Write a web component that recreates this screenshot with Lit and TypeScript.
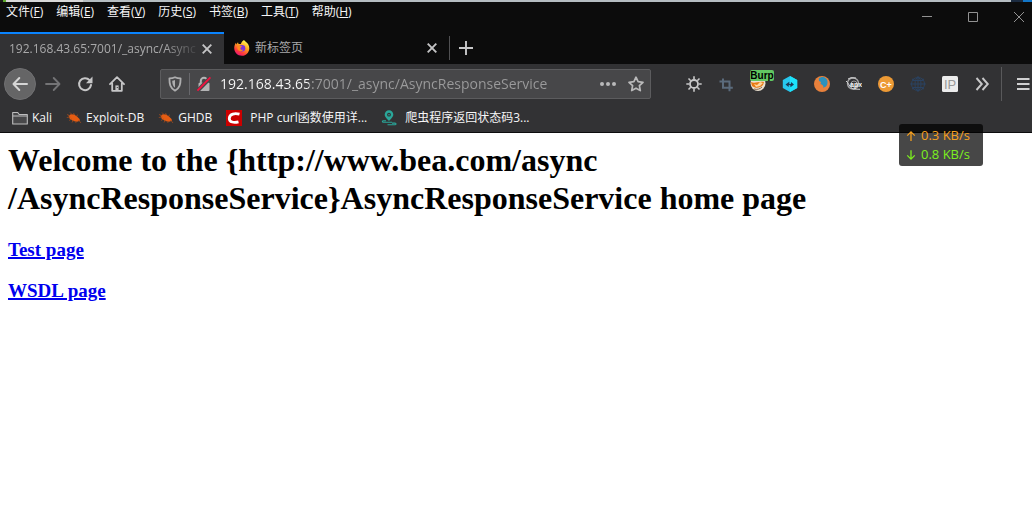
import { LitElement, html, css, svg, nothing } from "lit";
import { customElement } from "lit/decorators.js";

const icon = (body: unknown, size = 16) => html`<svg class="icon" width=${size} height=${size} viewBox="0 0 16 16" fill="none" aria-hidden="true">${body}</svg>`;

const closeIcon = icon(svg`<path d="M3.700 3.700l8.600 8.600M12.300 3.700l-8.600 8.600" stroke="#c4c4c5" stroke-width="1.900"/>`);
const plusIcon = icon(svg`<path d="M8 1v14M1 8h14" stroke="#c8c8c9" stroke-width="1.900"/>`);
const backIcon = icon(svg`<path d="M15 8H2M7.300 2L1.500 8l5.800 6" stroke="#d6d6d6" stroke-width="2" stroke-linecap="round" stroke-linejoin="round"/>`);
const forwardIcon = icon(svg`<path d="M1 8h13M8.700 2l5.800 6-5.800 6" stroke="#747476" stroke-width="1.800" stroke-linecap="round" stroke-linejoin="round"/>`);
const reloadIcon = icon(svg`<path d="M12.600 4.200A6 6 0 1 0 14 9" stroke="#c6c6c7" stroke-width="2" stroke-linecap="round"/><path d="M15.500 .6v6.600H9z" fill="#c6c6c7"/>`);
const homeIcon = icon(svg`<path d="M1 8.200L8 1.200l7 7M3.200 7.500v7.300h9.600V7.500" stroke="#c6c6c7" stroke-width="1.800" stroke-linecap="round" stroke-linejoin="round"/><path d="M6.400 14.500V9.400h3.200v5.100z" fill="#c6c6c7"/><path d="M7.800 11.500h1" stroke="#323234"/>`);
const shieldIcon = icon(svg`<path d="M8 1.200c2 1 3.900 1.200 5.600 1.200 0 5.600-.7 9.500-5.600 12.300C3.100 11.900 2.400 8 2.400 2.400 4.100 2.400 6 2.200 8 1.200z" stroke="#adadae" stroke-width="1.800" stroke-linejoin="round"/><path d="M8 4v7.800C5.900 10 5.300 7.900 5.200 4.700 6.200 4.600 7 4.400 8 4z" fill="#adadae"/>`);
const lockIcon = icon(svg`<path d="M4.800 7V5a3.200 3.200 0 0 1 6.400 0v2" stroke="#b4b4b5" stroke-width="2"/><rect x="2.500" y="6.800" width="11" height="8.200" rx="1" fill="#b4b4b5"/><path d="M1.500 14.800L14.500 1.500" stroke="#474749" stroke-width="4"/><path d="M1.400 14.600L14.400 1.400" stroke="#f5103f" stroke-width="1.800"/>`);
const dotsIcon = icon(svg`<g fill="#b9b9ba"><circle cx="2" cy="8" r="2"/><circle cx="8" cy="8" r="2"/><circle cx="14" cy="8" r="2"/></g>`);
const starIcon = icon(svg`<path d="M8 1.200l2.100 4.500 4.900.6-3.600 3.400.9 4.900L8 12.200l-4.300 2.400.9-4.900L1 6.300l4.900-.6z" stroke="#b9b9ba" stroke-width="1.700" stroke-linejoin="round"/>`);
const gearIcon = icon(svg`<circle cx="8" cy="8" r="4" stroke="#c8c8c9" stroke-width="1.800"/><path d="M8 .3v3M8 12.700v3M.3 8h3M12.700 8h3M2.500 2.500l2.200 2.200M11.300 11.300l2.200 2.200M2.500 13.500l2.200-2.200M11.300 4.700l2.200-2.200" stroke="#c8c8c9" stroke-width="1.600"/>`);
const cropIcon = icon(svg`<path d="M1.500 5.500h10v9.800M5 2.500v9.300h9.800" stroke="#5b6b7c" stroke-width="2"/>`);
const foxProxyIcon = icon(svg`<circle cx="8" cy="7.500" r="7.500" fill="#eadfce"/><path d="M1 6c4 2 7-1 13 0l-1 3c-3 3-7 4-11 1z" fill="#e87912"/><path d="M4 8l3 1 3-3 3 1-3 3-4 1z" fill="#ffd59a"/><path d="M4 13c3 1 6 0 8-2" stroke="#8a6a50"/>`);
const hexIcon = icon(svg`<path d="M8 0l7.200 4v8L8 16 .8 12V4z" fill="#27c7ee"/><path d="M8 0l7.200 4v8L8 16z" fill="#1ce3fb"/><path d="M3.500 8.400l3.800-2.600v2.100l1.500.2.200-2.100 3 2.400-3.500 2.800-.2-1.900-1.500-.2-.2 2z" fill="#1d3a57"/>`);
const foxIcon = icon(svg`<circle cx="8" cy="8" r="8" fill="#e8813c"/><path d="M4.800 2.500C8-.5 13 1 13.500 5.500c.3 3.500-1.500 6-4.500 6 1-1.500 0-2.500-2.500-3.500l.5-2-2-1z" fill="#2c91bd"/>`);
const shadyIcon = icon(svg`<circle cx="7" cy="7.500" r="5.500" stroke="#a5a5a6" stroke-width="1.400"/><circle cx="8" cy="8" r="3" stroke="#9a9a9b"/><path d="M0 5c3 2 3 6 7 8l7 .3M2 3l3-1.300 5 .3" stroke="#d3d3d3"/><text class="tiny-light" x="4" y="11">apx</text>`);
const cPlusIcon = icon(svg`<circle cx="8" cy="8" r="8" fill="#ed9a35"/><text class="tiny-c" x="2" y="11.500">C+</text>`);
const globeIcon = icon(svg`<g stroke="#2b4260"><circle cx="8" cy="8" r="6.500"/><ellipse cx="8" cy="8" rx="3" ry="6.500"/><path d="M8 1v14M1 8h14M2.500 4.500h11M2.500 11.500h11"/></g><g fill="#2b4260"><circle cx="8" cy="1.300" r="1"/><circle cx="8" cy="14.700" r="1"/><circle cx="1.300" cy="8" r="1"/><circle cx="14.700" cy="8" r="1"/><circle cx="3" cy="3.500" r="1"/><circle cx="13" cy="3.500" r="1"/><circle cx="3" cy="12.500" r="1"/><circle cx="13" cy="12.500" r="1"/></g>`);
const ipIcon = icon(svg`<rect width="16" height="16" rx="1.500" fill="#ececec"/><text class="tiny-ip" x="2" y="12.500">IP</text>`);
const moreIcon = icon(svg`<path d="M2.500 2l5.300 6-5.300 6M8.500 2l5.300 6-5.300 6" stroke="#c8c8c9" stroke-width="1.900"/>`);
const menuIcon = icon(svg`<path d="M2 3h12.500M2 8h12.500M2 13h12.500" stroke="#d0d0d1" stroke-width="1.800"/>`);
const folderIcon = icon(svg`<path d="M.7 14V2.500h5l1.500 2h8.100V14z" fill="#48484a" stroke="#bdbdbe" stroke-width="1.100" stroke-linejoin="round"/><path d="M1 6h14.200" stroke="#bdbdbe"/>`);
const bugIcon = icon(svg`<path d="M2.500 5.500l2.500-1.300 3 .3 3 2 2.500 2.500.5 1.800-3 1-4-.8L3.500 8.500z" fill="#e65c12"/><path d="M4 2.500l2 2M7.500 3l1 2M1 4.500l3 1.200M.8 7.500l3.500-.5M3 10.500l2.500-1.500M6 12.500l1.500-2.500M10.500 5.500l1.500-.5M12.500 10l2.500 3M9.500 11l.5 2" stroke="#9a4a20" stroke-width=".8"/>`);
const csdnIcon = icon(svg`<rect width="16" height="16" fill="#cb0000"/><path d="M13.500 4.200C9 3 3.600 3.600 3.300 8.300c-.2 4.200 5 4.500 9.200 3.500" stroke="#fff" stroke-width="2.800"/>`);
const pinIcon = icon(svg`<path d="M8 11C4.500 7.500 3.700 6.300 3.700 4.600a4.300 4.300 0 0 1 8.600 0C12.300 6.300 11.500 7.500 8 11z" fill="#2aa699"/><circle cx="8" cy="4.700" r="1.900" fill="#323234"/><circle cx="8" cy="4.700" r=".8" fill="#2aa699"/><path d="M5 10.800H2.500c-1.500 0-1.500 1.500 0 1.500h8.500M6.500 14.700h7.500c1.300 0 1.300-1.600 0-1.600h-3" stroke="#2aa699" stroke-width="1.100"/>`);
const upIcon = icon(svg`<path d="M8 14.500V2.500M3 7.500l5-5 5 5" stroke="currentColor" stroke-width="1.700"/>`, 12);
const downIcon = icon(svg`<path d="M8 1.500v12M3 8.500l5 5 5-5" stroke="currentColor" stroke-width="1.700"/>`, 12);
const firefoxIcon = html`<svg class="icon" width="16" height="16" viewBox="0 0 16 16" aria-hidden="true">
  <defs><linearGradient id="flame" x1=".8" y1="0" x2=".25" y2="1"><stop offset=".1" stop-color="#fff04a"/><stop offset=".45" stop-color="#ff9a1f"/><stop offset=".75" stop-color="#ff3a3d"/><stop offset="1" stop-color="#e5127c"/></linearGradient></defs>
  <path d="M10 0c1 1.500 3 2.500 4.200 4.300 3 5-.7 11.500-6.200 11.500S-.8 11 .5 5.800C.8 4.500 1.400 3.500 2 2.800l.3 1.600L4 2.200l.5 1.700 2.300.1C7.500 2 8.600.8 10 0z" fill="url(#flame)"/>
  <circle cx="8" cy="8.300" r="3.300" fill="#7a35dc"/><path d="M3.500 5.500l4.800.9-1.800 1.400c-.6 1.800 1 2.600 2.800 1.800-1 2.600-5.500 2-6-1.400z" fill="#ff8a1e"/></svg>`;

const menus = [["文件", "F"], ["编辑", "E"], ["查看", "V"], ["历史", "S"], ["书签", "B"], ["工具", "T"], ["帮助", "H"]];
const bookmarks: [string, unknown][] = [
  ["Kali", folderIcon], ["Exploit-DB", bugIcon], ["GHDB", bugIcon],
  ["PHP curl函数使用详...", csdnIcon], ["爬虫程序返回状态码3...", pinIcon],
];
const tools: [string, unknown][] = [
  ["Settings", gearIcon], ["Capture", cropIcon], ["FoxyProxy", foxProxyIcon], ["Transfer", hexIcon], ["Firefox", foxIcon],
  ["APK", shadyIcon], ["C+", cPlusIcon], ["Network", globeIcon], ["IP", ipIcon], ["More tools", moreIcon],
];

@customElement("app-root")
export class AppRoot extends LitElement {
  static styles = css`
    :host { display: block; position: relative; min-height: 100vh; background: #fff; font: 12px/16px "Open Sans", "Noto Sans CJK SC", sans-serif; color: #f6f6f7; }
    * { box-sizing: border-box; }
    button { display: flex; align-items: center; justify-content: center; border: 0; padding: 0; background: none; color: inherit; font: inherit; flex: none; }
    .icon { display: block; flex: none; }
    .edge { height: 2px; background: linear-gradient(90deg, #1c1c1c 3px, #5aa82c 3px 6px, #d8d8d8 6px 83px, #b5bdc1 83px 1011px, #1b2b40 1011px 1023px, #1276c8 1023px); }
    .menubar { display: flex; justify-content: space-between; align-items: flex-start; height: 30px; background: #0c0c0c; }
    .menus { display: flex; padding: 2px 6px; gap: 13px; }
    .menus u { text-underline-offset: 1px; }
    .clip { overflow: hidden; }
    .window { display: flex; align-items: center; height: 30px; margin-right: -10px; }
    .window button { width: 46px; height: 30px; }
    .tabs { display: flex; height: 32px; background: #0c0c0c; }
    .tab { display: flex; align-items: center; width: 224px; color: #a9a9aa; padding: 0 9px; }
    .tab .name { flex: 1; white-space: nowrap; }
    .tab.active { border-top: 2px solid #0a84ff; background: #323234; }
    .tab.active .name { mask-image: linear-gradient(90deg, #000 155px, transparent 192px); }
    .tab.idle { gap: 5px; width: 225px; padding-left: 10px; }
    .divider { width: 1px; height: 24px; margin: 4px 0; background: #505052; }
    .new { width: 32px; height: 32px; }
    .toolbar { display: flex; align-items: center; height: 40px; padding-left: 4px; background: #323234; }
    .toolbar button { width: 32px; height: 32px; }
    .toolbar .back { margin-right: 1px; border-radius: 50%; background: #656566; border: 1px solid #707072; }
    .address { display: flex; align-items: center; flex: 1; min-width: 0; height: 30px; margin: 0 27px; background: #474749; border: 1px solid #5c5c5e; border-radius: 2px; }
    .address button { width: 28px; height: 28px; }
    .address .line { width: 1px; height: 22px; background: #68686c; }
    .address input { flex: 1; min-width: 0; height: 28px; padding: 0 0 2px 2px; border: 0; outline: 0; font: 14px/20px "Open Sans", sans-serif; color: transparent; background: linear-gradient(90deg, #fafafa 91px, #9b9b9c 91px); background-clip: text; -webkit-background-clip: text; }
    .tools { display: flex; }
    .tools button { position: relative; }
    .badge { position: absolute; top: 2px; left: 8px; width: 24px; height: 11px; border-radius: 2px; background: #62c862; color: #000; font: bold 10px/11px "Liberation Sans", sans-serif; text-align: center; }
    .toolbar .sep { width: 1px; height: 34px; margin-left: 3px; background: #59595b; }
    .toolbar .burger { width: 30px; padding-left: 12px; }
    .bookmarks { display: flex; align-items: center; gap: 14px; height: 29px; padding: 0 12px; border-bottom: 1px solid #0c0c0d; background: #323234; }
    .bookmarks a { display: flex; align-items: center; gap: 4px; color: inherit; text-decoration: none; white-space: nowrap; }
    .bookmarks a.wide { gap: 8px; }
    .page { padding: 8px; color: #000; font-family: "Liberation Serif", serif; }
    h1 { margin: 0 0 22px; font-size: 32px; line-height: 38px; }
    h3 { margin: 0 0 20px; font-size: 19px; line-height: 21px; }
    h3 a { color: #0000ee; text-decoration-thickness: 2px; }
    .speed { position: absolute; right: 49px; top: 124px; width: 84px; padding: 2px 6px; border-radius: 3px; background: rgba(0, 0, 0, 0.72); font-size: 13px; line-height: 19px; }
    .rate { display: flex; align-items: center; gap: 4px; white-space: nowrap; }
    .up { color: #f6a01e; }
    .down { color: #7cf01e; }
    .tiny-light { font: bold 7px "Liberation Sans", sans-serif; fill: #f0f0f0; }
    .tiny-c { font: bold 9px "Liberation Sans", sans-serif; fill: #fff; }
    .tiny-ip { font: 13px "Liberation Sans", sans-serif; fill: #999; }
  `;

  render() {
    return html`
      <div class="edge"></div>
      <header class="menubar">
        <nav class="menus">${menus.map(([name, key]) => html`<button>${name}(<u>${key}</u>)</button>`)}</nav>
        <div class="clip"><div class="window">
          <button aria-label="Minimize">${icon(svg`<path d="M3 7.500h10" stroke="#929292"/>`)}</button>
          <button aria-label="Maximize">${icon(svg`<path d="M3.500 3.500h9v9h-9z" stroke="#929292"/>`)}</button>
          <button aria-label="Close">${icon(svg`<path d="M3 3l10 10M13 3L3 13" stroke="#929292"/>`)}</button>
        </div></div>
      </header>
      <div class="tabs">
        <div class="tab active"><span class="name">192.168.43.65:7001/_async/Async</span><button aria-label="Close tab">${closeIcon}</button></div>
        <div class="tab idle">${firefoxIcon}<span class="name">新标签页</span><button aria-label="Close tab">${closeIcon}</button></div>
        <div class="divider"></div>
        <button class="new" aria-label="New tab">${plusIcon}</button>
      </div>
      <div class="toolbar">
        <button class="back" aria-label="Back">${backIcon}</button>
        <button aria-label="Forward">${forwardIcon}</button>
        <button aria-label="Reload">${reloadIcon}</button>
        <button aria-label="Home">${homeIcon}</button>
        <div class="address">
          <button aria-label="Protection">${shieldIcon}</button><span class="line"></span>
          <button aria-label="Connection">${lockIcon}</button>
          <input aria-label="Address" value="192.168.43.65:7001/_async/AsyncResponseService" />
          <button aria-label="Page actions">${dotsIcon}</button>
          <button aria-label="Bookmark">${starIcon}</button>
        </div>
        <div class="tools">${tools.map(([name, glyph]) => html`<button aria-label=${name}>${glyph}${name === "FoxyProxy" ? html`<span class="badge">Burp</span>` : nothing}</button>`)}</div>
        <span class="sep"></span>
        <button class="burger" aria-label="Menu">${menuIcon}</button>
      </div>
      <nav class="bookmarks">${bookmarks.map(([name, glyph], i) => html`<a href="#" class=${i > 2 ? "wide" : ""}>${glyph}<span>${name}</span></a>`)}</nav>
      <main class="page">
        <h1>Welcome to the {http://www.bea.com/async<br />/AsyncResponseService}AsyncResponseService home page</h1>
        <h3><a href="#">Test page</a></h3>
        <h3><a href="#">WSDL page</a></h3>
      </main>
      <aside class="speed">
        <div class="rate up">${upIcon}<span>0.3 KB/s</span></div>
        <div class="rate down">${downIcon}<span>0.8 KB/s</span></div>
      </aside>`;
  }
}
